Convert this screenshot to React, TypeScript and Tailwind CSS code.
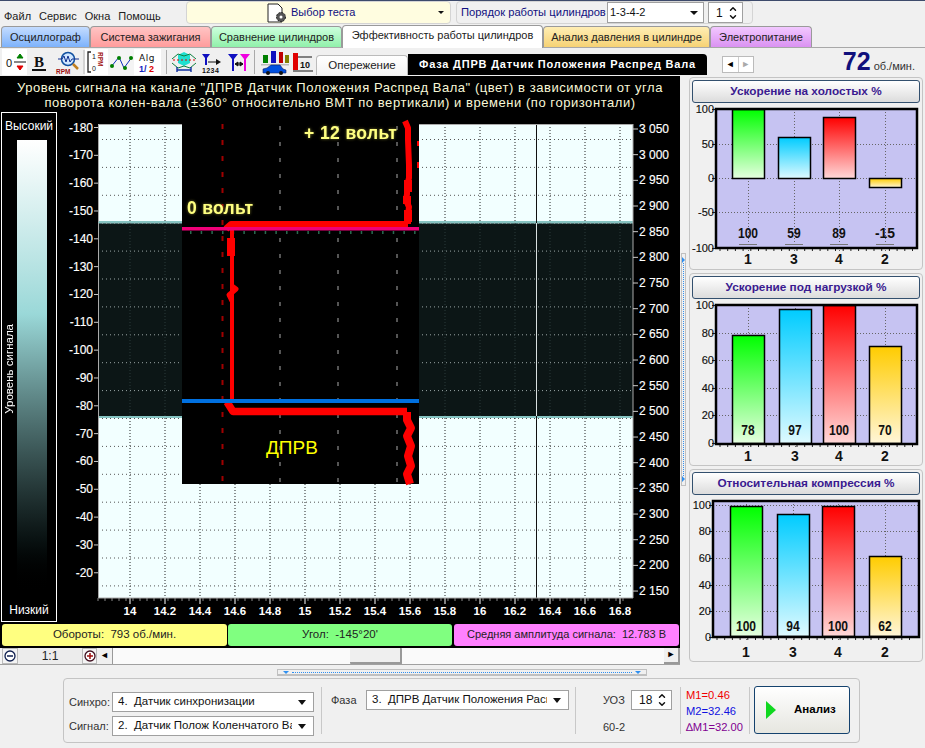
import { ChevronDown, ChevronUp } from 'lucide-react'

const FONT = { fontFamily: '"Liberation Sans", Arial, sans-serif' }

const tabs = [
  { label: 'Осциллограф', cls: 'w-[89px] ml-[1px] from-[#c4dcff] to-[#7db2fb]' },
  { label: 'Система зажигания', cls: 'w-[121px] from-[#ffc4c4] to-[#ff9c9c]' },
  { label: 'Сравнение цилиндров', cls: 'w-[131px] from-[#ccffdd] to-[#90f0aa]' },
  { label: 'Эффективность работы цилиндров', cls: 'w-[201px] h-[23px] from-white to-white', active: true },
  { label: 'Анализ давления в цилиндре', cls: 'w-[167px] from-[#ffeeb4] to-[#f6d274]' },
  { label: 'Электропитание', cls: 'w-[102px] from-[#f2c8ff] to-[#da92f2]' },
]

const leftAngles = [-180, -170, -160, -150, -140, -130, -120, -110, -100, -90, -80, -70, -60, -50, -40, -30, -20]
const rpmLabels = ['3 050', '3 000', '2 950', '2 900', '2 850', '2 800', '2 750', '2 700', '2 650', '2 600', '2 550', '2 500', '2 450', '2 400', '2 350', '2 300', '2 250', '2 200', '2 150']
const timeLabels = ['14', '14.2', '14.4', '14.6', '14.8', '15', '15.2', '15.4', '15.6', '15.8', '16', '16.2', '16.4', '16.6', '16.8']
const hLines = Array.from({ length: 17 }, (_, i) => 139.5 + i * 27.9)
const vLines = timeLabels.map((_, i) => 130 + i * 35)

function MainChart() {
  return (
    <svg width={623} height={510} viewBox="57 112 623 510" className="block" style={FONT}>
      <defs>
        <filter id="glow" x="-20%" y="-40%" width="140%" height="180%">
          <feDropShadow dx={0} dy={0} stdDeviation={1.6} floodColor="#a09a30" floodOpacity={0.7} />
        </filter>
      </defs>
      {/* plot */}
      <rect x={98} y={124} width={535} height={98} fill="#f2ffff" />
      <rect x={98} y={223} width={535} height={193} fill="#0c1616" />
      <rect x={98} y={418} width={535} height={180} fill="#f2ffff" />
      <rect x={98} y={221} width={535} height={2.5} fill="#86c4c2" />
      <rect x={98} y={416} width={535} height={2} fill="#86c4c2" />
      {hLines.map((y) => (
        <line key={y} x1={98} x2={633} y1={y} y2={y} stroke={y > 223 && y < 416 ? '#9aa6a6' : '#555'} strokeWidth={1} strokeDasharray="1 3" />
      ))}
      {vLines.map((x, i) => (
        <g key={x}>
          <line x1={x} x2={x} y1={124} y2={222} stroke="#222" strokeDasharray="1 2" />
          <line x1={x} x2={x} y1={223} y2={416} stroke="#2a3a3a" strokeDasharray="1 2" />
          <line x1={x} x2={x} y1={418} y2={598} stroke="#222" strokeDasharray="1 2" />
          <line x1={x} x2={x} y1={598} y2={604} stroke="#fff" />
          <text x={x} y={615} textAnchor="middle" fontSize={11.5} fontWeight={700} fill="#fff">{timeLabels[i]}</text>
        </g>
      ))}
      {Array.from({ length: 76 }, (_, i) => (
        <line key={i} x1={98 + i * 7} x2={98 + i * 7} y1={598} y2={601} stroke="#888" />
      ))}
      <line x1={536.5} x2={536.5} y1={124} y2={598} stroke="#111" />
      <line x1={536.5} x2={536.5} y1={223} y2={416} stroke="#d8e0e0" />
      <path d="M98.5 222V124.5H633" fill="none" stroke="#aaa" />
      <path d="M98.5 223V598H633V124" fill="none" stroke="#aaa" />

      {/* left / right axes */}
      {leftAngles.map((a, i) => {
        const y = 127.5 + i * 27.83
        return (
          <g key={a}>
            <line x1={94} x2={98} y1={y} y2={y} stroke="#ccc" />
            <text x={93} y={y + 4} textAnchor="end" fontSize={12} fill="#fff" stroke="#fff" strokeWidth={0.15}>{a}</text>
          </g>
        )
      })}
      {rpmLabels.map((r, i) => {
        const y = 129 + i * 25.67
        return (
          <g key={r}>
            <line x1={633} x2={638} y1={y} y2={y} stroke="#ccc" />
            <text x={639} y={y + 4} fontSize={12} fill="#fff" stroke="#fff" strokeWidth={0.15}>{r}</text>
          </g>
        )
      })}

      {/* overlay window */}
      <rect x={182} y={121} width={237} height={363} fill="#000" />
      <line x1={222.5} x2={222.5} y1={124} y2={484} stroke="#a00000" strokeWidth={2} strokeDasharray="5 11" />
      {[280, 338, 397].map((x) => (
        <line key={x} x1={x} x2={x} y1={126} y2={484} stroke="#555" strokeWidth={2} strokeDasharray="4 12" />
      ))}
      {Array.from({ length: 22 }, (_, i) => (
        <rect key={i} x={190 + i * 10.67} y={231} width={1.5} height={3} fill="#2a6a50" />
      ))}
      <g fill="none" stroke="#ff0000" strokeLinejoin="round">
        <path d="M405 121L408 128L408 140L409 165L409 178L407 186L407 194L406 200L409 207L408 215L408 224" strokeWidth={6} />
        <path d="M408 180V192M407 196V204M408 210V222" strokeWidth={8} />
        <path d="M226 229L231 224.5H408" strokeWidth={7} />
        <path d="M232 228V401" strokeWidth={4} />
        <path d="M231 238V256" strokeWidth={8} />
        <path d="M232 286L236 289L229 295L232 301" strokeWidth={5} />
        <path d="M227 402L233 411.5H407" strokeWidth={7.5} />
        <path d="M407 412L407 420L411 428L407 436L411 446L408 456L411 466L407 474L410 484" strokeWidth={8} />
      </g>
      <rect x={417} y={141} width={2} height={5} fill="#f00" />
      <rect x={417} y={162} width={2} height={6} fill="#f00" />
      <rect x={182} y={227} width={237} height={3.5} fill="#f00078" />
      <rect x={182} y={399} width={237} height={4} fill="#0070e0" />
      <g filter="url(#glow)">
        <text x={304} y={139} fontSize={17.5} fontWeight={700} fill="#ffff80" letterSpacing={0.4}>+ 12 вольт</text>
        <text x={187} y={214} fontSize={17.5} fontWeight={700} fill="#ffff80" letterSpacing={0.3}>0 вольт</text>
      </g>
      <text x={266} y={454} fontSize={19} fill="#ffff00">ДПРВ</text>
    </svg>
  )
}

interface BarData {
  label: string
  value: number
  y1: number
  y2: number
  x: number
  grad: string
}

const GRADS = [
  { id: 'g', top: '#00ff00', bottom: '#e6ffe0' },
  { id: 'b', top: '#00ccff', bottom: '#dffaff' },
  { id: 'r', top: '#ff0000', bottom: '#ffd8d8' },
  { id: 'y', top: '#ffcc00', bottom: '#fff6d8' },
]

// All chart coordinates are relative to the svg's top-left corner
function BarChart({ prefix, left, right, top, bottom, ticks, bars, labelY, axisLabelY, marks }: {
  prefix: string
  left: number
  right: number
  top: number
  bottom: number
  ticks: { y: number; label: string }[]
  bars: BarData[]
  labelY: number
  axisLabelY: number
  marks?: boolean
}) {
  return (
    <svg width={232} height={166} className="block overflow-visible" style={FONT}>
      <defs>
        {GRADS.map((g) => (
          <linearGradient key={g.id} id={prefix + g.id} x1="0" y1="0" x2="0" y2="1">
            <stop offset="0" stopColor={g.top} />
            <stop offset="1" stopColor={g.bottom} />
          </linearGradient>
        ))}
      </defs>
      <rect x={left} y={top} width={right - left} height={bottom - top} fill="#c6c3f2" />
      {ticks.map((t) => (
        <g key={t.label}>
          <line x1={left} x2={right} y1={t.y + 0.5} y2={t.y + 0.5} stroke="#666" strokeDasharray="1 2" />
          <line x1={left - 4} x2={left} y1={t.y + 0.5} y2={t.y + 0.5} stroke="#222" />
          <text x={left - 2} y={t.y + 4} textAnchor="end" fontSize={11} fill="#111" stroke="#111" strokeWidth={0.15}>{t.label}</text>
        </g>
      ))}
      {bars.map((b) => (
        <line key={b.label} x1={b.x + 16.5} x2={b.x + 16.5} y1={top} y2={bottom + 5} stroke="#666" strokeDasharray="1 2" />
      ))}
      {Array.from({ length: 26 }, (_, i) => (
        <line key={i} x1={left + 4 + i * 7.7} x2={left + 4 + i * 7.7} y1={bottom} y2={bottom + 3} stroke="#222" />
      ))}
      {bars.map((b) => (
        <g key={b.label}>
          <rect x={b.x + 0.5} y={b.y1 + 0.5} width={32} height={b.y2 - b.y1} fill={`url(#${prefix}${b.grad})`} stroke="#000" strokeWidth={1.5} />
          <text
            x={b.x + 16}
            y={labelY}
            textAnchor="middle"
            fontSize={15}
            fontWeight={700}
            fill="#111"
            textLength={String(b.value).length * 6.7}
            lengthAdjust="spacingAndGlyphs"
          >
            {b.value}
          </text>
          {marks && <rect x={b.x + 7} y={labelY + 6} width={18} height={1} fill="#777" />}
          <text x={b.x + 16} y={axisLabelY} textAnchor="middle" fontSize={14} fontWeight={700} fill="#111">{b.label}</text>
        </g>
      ))}
      <rect x={left} y={top} width={right - left} height={bottom - top} fill="none" stroke="#000" strokeWidth={2.5} />
    </svg>
  )
}

function Panel({ title, children }: { title: string; children: React.ReactNode }) {
  return (
    <div className="h-[193px] w-[234px] rounded-[4px] border border-[#c4c4c4] px-[2px] pt-[2px]">
      <div className="h-[23px] flex items-center justify-center rounded-[3px] border border-[#33506e] bg-gradient-to-b from-white to-[#dcdcdc] text-[11.8px] font-bold text-[#3a1a90] whitespace-nowrap">
        {title}
      </div>
      {children}
    </div>
  )
}

function Toolbar() {
  return (
    <div className="w-[316px] shrink-0 flex items-center h-[28px] pl-[2px] [&>svg]:shrink-0" style={FONT}>
      <svg width={25} height={26} className="bg-white">
        <text x={4} y={18} fontSize={11} fill="#111">0</text>
        <path d="M12 13h12" stroke="#111" />
        <path d="M18 5v3M15 9l3-4 3 4z" stroke="#008000" fill="#008000" />
        <path d="M18 21v-3M15 17l3 4 3-4z" stroke="#e00000" fill="#e00000" />
      </svg>
      <svg width={56} height={26}>
        <text x={7} y={18} fontSize={15} fontWeight={700} fill="#111" style={{ fontFamily: '"Liberation Serif", serif' }}>B</text>
        <rect x={5} y={20} width={14} height={2} fill="#111" />
        <circle cx={41} cy={10} r={6.5} fill="#cfe6ff" stroke="#1050a0" strokeWidth={1.5} />
        <path d="M31 10h4l2-3 2 6 2-6 2 6 2-3h7" fill="none" stroke="#103090" />
        <path d="M46 15l5 5" stroke="#c08020" strokeWidth={2.5} />
        <text x={29} y={25} fontSize={6.5} fontWeight={700} fill="#a01010">RPM</text>
      </svg>
      <div className="w-[2px] h-[24px] shrink-0 bg-[#d4d4d4]" />
      <svg width={23} height={26} className="bg-white">
        <path d="M6 3h-3v20h3" fill="none" stroke="#222" strokeWidth={1.3} />
        <text x={7} y={10} fontSize={7} fill="#111">1</text>
        <text x={7} y={22} fontSize={7} fill="#111">0</text>
        <text x={0} y={0} fontSize={6.5} fontWeight={700} fill="#a01010" transform="translate(13,3) rotate(90)">RPM</text>
      </svg>
      <svg width={26} height={26} className="bg-[#f4f4f4]">
        <path d="M3 18L11 8L16 19L24 8" fill="none" stroke="#1030c0" />
        <g fill="#008000"><circle cx={4} cy={17} r={2} /><circle cx={11} cy={9} r={2} /><circle cx={17} cy={19} r={2} /><circle cx={23} cy={9} r={2} /></g>
      </svg>
      <svg width={27} height={26} className="bg-white">
        <text x={5} y={12} fontSize={9} fill="#111" letterSpacing={0.6} style={{ fontFamily: '"DejaVu Sans", sans-serif' }}>Alg</text>
        <text x={5} y={23} fontSize={9} fontWeight={700} fill="#1020c0">1/</text>
        <text x={15} y={23} fontSize={9} fontWeight={700} fill="#e00000">2</text>
      </svg>
      <div className="w-[1px] h-[24px] shrink-0 bg-[#aaa] ml-[5px] mr-[3px]" />
      <svg width={28} height={26}>
        <path d="M8 6l6-3 6 3v8l-6 3-6-3z" fill="#20e0d0" />
        <path d="M2 10l6-5 6 2 6-2 6 5M2 14l6 5 6-2 6 2 6-5" fill="none" stroke="#108040" />
        <path d="M3 11h22" stroke="#e00000" strokeDasharray="2 2" />
        <path d="M7 18v5M21 18v5M7 21h14" stroke="#1030a0" strokeWidth={1.4} />
      </svg>
      <svg width={26} height={26}>
        <path d="M4 5h8l-3 4v7H7V9z" fill="#1010c0" />
        <path d="M10 13h10" stroke="#111" />
        <path d="M18 10l5 3-5 3z" fill="#111" />
        <text x={4} y={24} fontSize={7} fontWeight={700} fill="#111" letterSpacing={0.4}>1234</text>
      </svg>
      <svg width={30} height={26}>
        <path d="M4 5h10l-4 5v12H8V10z" fill="#1010c0" />
        <path d="M16 5h10l-4 5v12h-2V10z" fill="#f000e0" />
        <path d="M11 15h8M11 15l3-2v4zM19 15l-3-2v4z" stroke="#111" fill="#111" />
      </svg>
      <div className="w-[1px] h-[24px] shrink-0 bg-[#aaa] mr-[6px]" />
      <svg width={30} height={26}>
        <rect x={2} y={6} width={5} height={8} fill="#008000" />
        <rect x={10} y={2} width={5} height={12} fill="#1010c0" />
        <rect x={18} y={3} width={4} height={11} fill="#c00000" />
        <rect x={24} y={6} width={4} height={8} fill="#808000" />
        <rect x={0} y={15} width={28} height={1.5} fill="#bbb" />
        <path d="M2 24v-4l4-1 4-3h9l3 4 3 1v3z" fill="#0050e0" stroke="#102060" strokeWidth={0.6} />
        <circle cx={7} cy={24} r={2} fill="#111" /><circle cx={20} cy={24} r={2} fill="#111" />
      </svg>
      <svg width={25} height={26}>
        <rect x={2} y={4} width={5} height={17} fill="#e00000" />
        <path d="M7 8h14M2 22h20" stroke="#111" />
        <text x={9} y={19} fontSize={9} fontWeight={700} fill="#111">10</text>
      </svg>
    </div>
  )
}

function Select({ text, cls }: { text: string; cls: string }) {
  return (
    <div className={`${cls} h-[20px] flex items-center justify-between border border-[#a0a0a0] bg-white pl-[5px] pr-[7px] text-[11.5px] text-[#111] overflow-hidden`}>
      <span className="whitespace-pre overflow-hidden">{text}</span>
      <svg width={8} height={5} className="shrink-0 ml-[6px]"><path d="M0 0h8L4 5z" fill="#111" /></svg>
    </div>
  )
}

function Spin({ value, cls }: { value: string; cls: string }) {
  return (
    <div className={`${cls} h-[20px] flex items-center justify-between border border-[#a0a0a0] bg-white pl-[7px] pr-[4px] text-[12px] text-[#111]`}>
      <span>{value}</span>
      <div className="flex flex-col items-center text-[#111]">
        <ChevronUp size={10} strokeWidth={3.5} className="-mb-[2px]" />
        <ChevronDown size={10} strokeWidth={3.5} />
      </div>
    </div>
  )
}

export default function App() {
  return (
    <div className="w-[925px] h-[748px] flex flex-col overflow-hidden bg-[#f0f0f0] border-t border-[#3d4a6b] text-[11px] text-[#222] whitespace-nowrap" style={FONT}>
      {/* top row */}
      <div className="h-[24px] flex">
        <div className="w-[186px] flex items-end gap-[8px] pl-[4px] pb-[1px] text-[11px] text-[#222]">
          <span>Файл</span>
          <span>Сервис</span>
          <span>Окна</span>
          <span>Помощь</span>
        </div>
        <div className="w-[265px] h-[23px] flex items-center rounded-[4px] border border-[#d4d4d4] bg-[#fffde0] pr-[6px]">
          <svg width={24} height={22} className="ml-[79px] mr-[1px]">
            <path d="M2 2h10l4 4v14H2z" fill="#fff" stroke="#222" />
            <circle cx={15} cy={15} r={4.5} fill="#555" stroke="#222" strokeDasharray="2 1" />
            <circle cx={15} cy={15} r={1.5} fill="#fff" />
          </svg>
          <span className="text-[11px] text-[#101080]">Выбор теста</span>
          <svg width={6} height={3} className="ml-auto"><path d="M0 0h6L3 3z" fill="#111" /></svg>
        </div>
        <div className="ml-[5px] w-[297px] h-[23px] flex items-center rounded-[4px] border border-[#d4d4d4] pl-[4px]">
          <span className="w-[146px] text-[11.2px] text-[#101080]">Порядок работы цилиндров</span>
          <div className="w-[97px] h-[21px] flex items-center justify-between border border-[#a0a0a0] bg-white pl-[2px] pr-[5px] text-[11px] text-[#111]">
            1-3-4-2
            <svg width={8} height={4}><path d="M0 0h8L4 4z" fill="#111" /></svg>
          </div>
          <Spin value="1" cls="ml-[4px] w-[35px] !h-[21px]" />
        </div>
      </div>

      {/* tabs */}
      <div className="h-[23px] flex items-end border-b border-[#a8a8a8]">
        {tabs.map((t) => (
          <div
            key={t.label}
            className={`${t.cls} ${t.active ? 'relative top-[1px] pb-[4px]' : 'h-[21px]'} flex items-center justify-center rounded-t-[4px] border border-b-0 border-[#9a9a9a] bg-gradient-to-b text-[11px] text-[#222]`}
          >
            {t.label}
          </div>
        ))}
      </div>

      {/* toolbar and sub tabs */}
      <div className="h-[28px] flex">
        <Toolbar />
        <div className="flex items-end h-[27px]">
          <div className="w-[92px] h-[20px] flex items-center justify-center rounded-t-[4px] border border-b-0 border-[#bbb] bg-gradient-to-b from-white to-[#f4f4f4] text-[11.5px] text-[#222]">Опережение</div>
          <div className="w-[299px] h-[21px] flex items-center justify-center rounded-tr-[4px] bg-black text-[11px] font-bold text-white tracking-[0.8px]">Фаза ДПРВ Датчик Положения Распред Вала</div>
          <div className="ml-[15px] mb-[2px] w-[32px] h-[17px] flex border border-[#bbb] bg-white text-[9px]">
            <span className="flex-1 flex items-center justify-center border-r border-[#ccc] text-black">◄</span>
            <span className="flex-1 flex items-center justify-center text-[#aaa]">►</span>
          </div>
          <div className="w-[171px] flex items-baseline justify-end pr-[10px] pb-[1px]">
            <span className="text-[25px] leading-[26px] font-bold text-[#10107c]">72</span>
            <span className="ml-[3px] text-[11px] text-[#333]">об./мин.</span>
          </div>
        </div>
      </div>

      {/* main */}
      <div className="h-[589px] flex">
        <div className="w-[680px] flex flex-col">
          <div className="bg-black flex-1 flex flex-col">
            <div className="h-[36px] flex flex-col items-center text-[13px] leading-[15px] pt-[4px] text-[#f8f8d8] tracking-[0.55px]">
              <span>Уровень сигнала на канале "ДПРВ Датчик Положения Распред Вала" (цвет) в зависимости от угла</span>
              <span>поворота колен-вала (±360° относительно ВМТ по вертикали) и времени (по горизонтали)</span>
            </div>
            <div className="flex">
              <div className="w-[56px] h-[510px] ml-[1px] flex flex-col items-center border border-white text-white">
                <span className="h-[27px] flex items-center text-[12px]">Высокий</span>
                <div className="flex w-full h-[460px]">
                  <div className="w-[15px] flex items-center justify-center">
                    <span className="[writing-mode:vertical-rl] rotate-180 text-[11.5px] whitespace-nowrap">Уровень сигнала</span>
                  </div>
                  <div className="w-[30px] h-full bg-gradient-to-b from-white via-[#9ad8d8] via-[38%] to-black" />
                </div>
                <span className="h-[22px] flex items-center text-[12px] mt-[1px]">Низкий</span>
              </div>
              <MainChart />
            </div>
            <div className="h-[25px] flex items-center gap-[1px] pl-[2px] text-[#222] whitespace-pre">
              <div className="w-[225px] h-[22px] flex items-center justify-center rounded-[3px] bg-[#ffff80] text-[11.5px]">Обороты:  793 об./мин.</div>
              <div className="w-[224px] h-[22px] flex items-center justify-center rounded-[3px] bg-[#80ff80] text-[11.5px]">Угол:  -145°20'</div>
              <div className="w-[225px] h-[22px] ml-[1px] flex items-center justify-center rounded-[3px] bg-[#ff80ff] text-[11px]">Средняя амплитуда сигнала:  12.783 В</div>
            </div>
          </div>
          {/* scroll row */}
          <div className="h-[17px] flex items-stretch border-b border-[#a0a0a0] bg-[#f4f4f4] pl-[2px] text-[12px] text-[#222]">
            <div className="w-[16px] flex items-center justify-center border border-[#bbb]">
              <svg width={12} height={12}><circle cx={6} cy={6} r={5} fill="#fff" stroke="#102050" strokeWidth={1.3} /><path d="M3 6h6" stroke="#102050" strokeWidth={1.5} /></svg>
            </div>
            <div className="w-[64px] flex items-center justify-center bg-[#ececec]">1:1</div>
            <div className="w-[15px] flex items-center justify-center border border-[#bbb]">
              <svg width={12} height={12}><circle cx={6} cy={6} r={5} fill="#fff" stroke="#401020" strokeWidth={1.3} /><path d="M3 6h6M6 3v6" stroke="#a01010" strokeWidth={1.5} /></svg>
            </div>
            <div className="w-[16px] flex items-center justify-center border-r border-[#999] bg-[#f0f0f0] text-[9px] text-black">◄</div>
            <div className="w-[237px] bg-[#fafafa]" />
            <div className="w-[52px] rounded-[1px] border-r-2 border-b-2 border-[#999] bg-[#efefef]" />
            <div className="flex-1 bg-[#fafafa]" />
            <div className="w-[16px] flex items-center justify-center border-r-2 border-b-2 border-[#999] bg-[#f0f0f0] text-[9px] text-black">►</div>
          </div>
        </div>

        {/* vertical splitter */}
        <div className="w-[9px] flex flex-col pl-[1px] pt-[177px]">
          <div className="w-[5px] h-[233px] flex flex-col items-center justify-between border border-[#c0c0c0] py-[3px]">
            <svg width={3} height={6} className="shrink-0"><path d="M0 0L3 3L0 6z" fill="#3090f0" /></svg>
            <div className="flex-1 border-l border-dotted border-[#3090f0]" />
            <svg width={3} height={6} className="shrink-0"><path d="M0 0L3 3L0 6z" fill="#3090f0" /></svg>
          </div>
        </div>

        {/* right panels */}
        <div className="w-[236px] flex flex-col gap-[3px] pt-[1px]">
          <Panel title="Ускорение на холостых %">
            <BarChart
              prefix="a"
              left={24}
              right={225}
              top={6}
              bottom={145}
              labelY={135}
              axisLabelY={161}
              marks
              ticks={[
                { y: 6, label: '100' },
                { y: 41, label: '50' },
                { y: 75, label: '0' },
                { y: 109, label: '-50' },
                { y: 145, label: '-100' },
              ]}
              bars={[
                { label: '1', value: 100, y1: 6, y2: 75, x: 40, grad: 'g' },
                { label: '3', value: 59, y1: 34, y2: 75, x: 86, grad: 'b' },
                { label: '4', value: 89, y1: 14, y2: 75, x: 131, grad: 'r' },
                { label: '2', value: -15, y1: 75, y2: 84, x: 177, grad: 'y' },
              ]}
            />
          </Panel>
          <Panel title="Ускорение под нагрузкой %">
            <BarChart
              prefix="c"
              left={24}
              right={225}
              top={6}
              bottom={145}
              labelY={136}
              axisLabelY={162}
              ticks={[
                { y: 6, label: '100' },
                { y: 34, label: '80' },
                { y: 61, label: '60' },
                { y: 89, label: '40' },
                { y: 116, label: '20' },
                { y: 144, label: '0' },
              ]}
              bars={[
                { label: '1', value: 78, y1: 36, y2: 144, x: 40, grad: 'g' },
                { label: '3', value: 97, y1: 10, y2: 144, x: 87, grad: 'b' },
                { label: '4', value: 100, y1: 6, y2: 144, x: 131, grad: 'r' },
                { label: '2', value: 70, y1: 47, y2: 144, x: 177, grad: 'y' },
              ]}
            />
          </Panel>
          <Panel title="Относительная компрессия %">
            <BarChart
              prefix="e"
              left={21}
              right={227}
              top={6}
              bottom={142}
              labelY={136}
              axisLabelY={162}
              ticks={[
                { y: 10, label: '100' },
                { y: 36, label: '80' },
                { y: 63, label: '60' },
                { y: 90, label: '40' },
                { y: 116, label: '20' },
                { y: 142, label: '0' },
              ]}
              bars={[
                { label: '1', value: 100, y1: 11, y2: 141, x: 38, grad: 'g' },
                { label: '3', value: 94, y1: 19, y2: 141, x: 85, grad: 'b' },
                { label: '4', value: 100, y1: 11, y2: 141, x: 130, grad: 'r' },
                { label: '2', value: 62, y1: 61, y2: 141, x: 177, grad: 'y' },
              ]}
            />
          </Panel>
        </div>
      </div>

      {/* horizontal splitter */}
      <div className="h-[13px] flex justify-center items-start pt-[4px]">
        <div className="w-[370px] h-[7px] ml-[-2px] flex items-center gap-[3px] px-[5px] border border-[#c0c0c0] border-b-2">
          <svg width={6} height={3} className="shrink-0"><path d="M0 0H6L3 3z" fill="#3090f0" /></svg>
          <div className="flex-1 border-t border-dotted border-[#3090f0]" />
          <svg width={6} height={3} className="shrink-0"><path d="M0 0H6L3 3z" fill="#3090f0" /></svg>
        </div>
      </div>

      {/* bottom group */}
      <div className="ml-[63px] w-[797px] h-[65px] flex items-stretch rounded-[4px] border border-[#c4c4c4] py-[8px] text-[11px]">
        <div className="w-[258px] flex flex-col gap-[4px] pl-[5px] pt-[5px] border-r border-[#c8c8c8]">
          <div className="flex items-center gap-[2px]">
            <span className="w-[41px] text-[#333]">Синхро:</span>
            <Select text="4.  Датчик синхронизации" cls="w-[202px]" />
          </div>
          <div className="flex items-center gap-[2px]">
            <span className="w-[41px] text-[#333]">Сигнал:</span>
            <Select text="2.  Датчик Полож Коленчатого Вал" cls="w-[202px]" />
          </div>
        </div>
        <div className="w-[254px] flex items-start pl-[9px] pt-[3px] border-r border-[#c8c8c8]">
          <span className="w-[35px] pt-[2px] text-[#333]">Фаза</span>
          <Select text="3.  ДПРВ Датчик Положения Расп" cls="w-[203px]" />
        </div>
        <div className="w-[105px] flex flex-col pl-[27px] pt-[3px] border-r border-[#c8c8c8]">
          <div className="flex items-center">
            <span className="w-[28px] text-[#333]">УОЗ</span>
            <Spin value="18" cls="w-[41px]" />
          </div>
          <span className="mt-[9px] text-[#333]">60-2</span>
        </div>
        <div className="w-[69px] flex flex-col pl-[5px] leading-[16px] text-[11.2px] border-r border-[#c8c8c8]">
          <span className="text-[#f00000]">M1=0.46</span>
          <span className="text-[#1010e0]">M2=32.46</span>
          <span className="text-[#800090]">∆M1=32.00</span>
        </div>
        <div className="ml-[4px] w-[96px] h-[48px] -mt-[1px] flex items-center rounded-[3px] border border-[#14426e] bg-gradient-to-b from-white to-[#e6e6e0]">
          <svg width={12} height={20} className="ml-[10px]"><path d="M1 1L11 10L1 19z" fill="#10d820" /></svg>
          <span className="ml-[17px] text-[11.5px] font-bold text-black">Анализ</span>
        </div>
      </div>
    </div>
  )
}
